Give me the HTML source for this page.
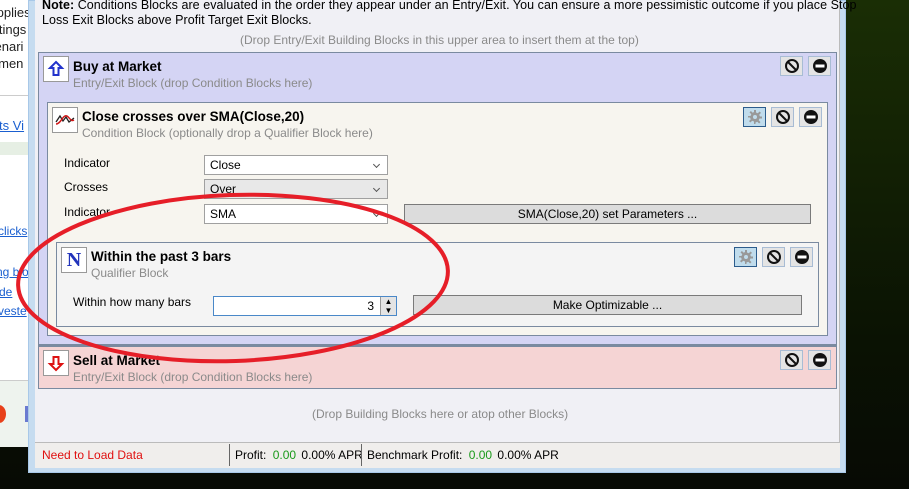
<!DOCTYPE html>
<html><head><meta charset="utf-8"><style>
*{margin:0;padding:0;box-sizing:border-box}
body{width:909px;height:489px;overflow:hidden;position:relative;font-family:"Liberation Sans",sans-serif;font-size:12px;color:#000;background:linear-gradient(180deg,#1a2e05,#0a1203 70%,#070a04)}
.a{position:absolute}
.lnk{color:#1a5fd0;text-decoration:underline}
.blk{position:absolute;border:1px solid #7a8aa0}
.ttl{position:absolute;font-weight:bold;font-size:13.5px}
.sub{position:absolute;color:#8a8a8a;font-size:12px}
.ib{position:absolute;width:23px;height:20px;background:#e4e4e4;border:1px solid #a8bcd4;display:flex;align-items:center;justify-content:center}
.ib.g{background:#c0dcec;border-color:#2c5c8c}
.dd{position:absolute;height:20px;border:1px solid #a0a0a0;background:#fff;padding:2px 5px;font-size:12px}
.dd:after{content:"";position:absolute;right:8px;top:6px;width:4px;height:4px;border-right:1px solid #555;border-bottom:1px solid #555;transform:rotate(45deg)}
.btn{position:absolute;height:20px;border:1px solid #7a7a7a;background:#dcdcdc;text-align:center;line-height:18px;font-size:12px}
.lb{position:absolute;font-size:12px}
.icon{position:absolute;width:26px;height:26px;background:#fff;border:1px solid #999}
</style></head><body>
<!-- left page -->
<div class="a" style="left:0;top:0;width:30px;height:380px;background:#fff"></div>
<div class="a" style="left:0;top:380px;width:30px;height:67px;background:#eef3ee;border-top:1px solid #ccc"></div>
<div class="a" style="top:4px;font-size:13px;line-height:17px;color:#222;left:-12px">Applies<br>ettings<br>cenari<br>lemen</div>
<div class="a" style="left:0;top:95px;width:30px;height:1px;background:#ccc"></div>
<div class="a lnk" style="left:-1px;top:118px;font-size:13px">ts Vi</div>
<div class="a" style="left:0;top:142px;width:30px;height:13px;background:#e6efe4"></div>
<div class="a lnk" style="left:-2px;top:224px;font-size:12px">clicks</div>
<div class="a lnk" style="left:-4px;top:265px;font-size:12px">ng blo</div>
<div class="a lnk" style="left:-1px;top:285px;font-size:12px">de</div>
<div class="a lnk" style="left:-2px;top:304px;font-size:12px">veste</div>
<div class="a" style="left:-8px;top:405px;width:14px;height:18px;border-radius:50%;background:#e8401a"></div>
<div class="a" style="left:25px;top:406px;width:4px;height:16px;background:#6a7ad0"></div>
<!-- window -->
<div class="a" style="left:28px;top:0;width:818px;height:473px;background:#c6dcf0;border:1px solid #a8c8e8"></div>
<div class="a" style="left:35px;top:0;width:805px;height:442px;background:#f0f0f5;border-right:1px solid #bbb"></div>
<div class="a" style="left:42px;top:-2px;font-size:12.5px;line-height:15px;width:830px;letter-spacing:0.05px"><b>Note:</b> Conditions Blocks are evaluated in the order they appear under an Entry/Exit. You can ensure a more pessimistic outcome if you place Stop Loss Exit Blocks above Profit Target Exit Blocks.</div>
<div class="a" style="left:240px;top:33px;color:#8a8a8a">(Drop Entry/Exit Building Blocks in this upper area to insert them at the top)</div>
<!-- buy -->
<div class="blk" style="left:38px;top:52px;width:799px;height:293px;background:#d4d4f4"></div>
<div class="icon" style="left:43px;top:56px"><svg width="24" height="24" viewBox="0 0 24 24"><path d="M12 5 L18 11 H14.5 V18 H9.5 V11 H6 Z" fill="none" stroke="#2233cc" stroke-width="2"/></svg></div>
<div class="ttl" style="left:73px;top:59px">Buy at Market</div>
<div class="sub" style="left:73px;top:76px">Entry/Exit Block (drop Condition Blocks here)</div>
<!-- condition -->
<div class="blk" style="left:47px;top:102px;width:781px;height:234px;background:#f7f5ef"></div>
<div class="icon" style="left:52px;top:107px"><svg width="24" height="24" viewBox="0 0 24 24"><path d="M3 14 L7 8 L10 13 L13 9 L16 14 L21 10" fill="none" stroke="#222" stroke-width="1.3"/><path d="M3 16 C8 16 10 6 14 8 C17 10 18 14 21 12" fill="none" stroke="#d01818" stroke-width="1.5"/></svg></div>
<div class="ttl" style="left:82px;top:109px">Close crosses over SMA(Close,20)</div>
<div class="sub" style="left:82px;top:126px">Condition Block (optionally drop a Qualifier Block here)</div>
<div class="lb" style="left:64px;top:156px">Indicator</div>
<div class="lb" style="left:64px;top:180px">Crosses</div>
<div class="lb" style="left:64px;top:205px">Indicator</div>
<div class="dd" style="left:204px;top:155px;width:184px">Close</div>
<div class="dd" style="left:204px;top:179px;width:184px;background:#e8e8e8">Over</div>
<div class="dd" style="left:204px;top:204px;width:184px">SMA</div>
<div class="btn" style="left:404px;top:204px;width:407px">SMA(Close,20) set Parameters ...</div>
<!-- qualifier -->
<div class="blk" style="left:56px;top:242px;width:763px;height:85px;background:#f4f4f4"></div>
<div class="icon" style="left:61px;top:247px;font-family:'Liberation Serif',serif;font-weight:bold;font-size:20px;color:#2233bb;text-align:center;line-height:24px">N</div>
<div class="ttl" style="left:91px;top:249px">Within the past 3 bars</div>
<div class="sub" style="left:91px;top:266px">Qualifier Block</div>
<div class="lb" style="left:73px;top:295px">Within how many bars</div>
<div class="a" style="left:213px;top:296px;width:184px;height:20px;border:1px solid #4a88c8;background:#fff;text-align:right;padding:2px 22px 0 0">3</div>
<div class="a" style="left:380px;top:297px;width:16px;height:18px;background:#e4e4e4;border-left:1px solid #999;font-size:8px;line-height:9px;text-align:center">▲<br>▼</div>
<div class="btn" style="left:413px;top:295px;width:389px">Make Optimizable ...</div>
<!-- sell -->
<div class="blk" style="left:38px;top:345px;width:799px;height:44px;background:#f5d4d4;border-top:2px solid #7a8aa0"></div>
<div class="icon" style="left:43px;top:350px"><svg width="24" height="24" viewBox="0 0 24 24"><path d="M12 19 L18 13 H14.5 V6 H9.5 V13 H6 Z" fill="none" stroke="#dd1111" stroke-width="2"/></svg></div>
<div class="ttl" style="left:73px;top:353px">Sell at Market</div>
<div class="sub" style="left:73px;top:370px">Entry/Exit Block (drop Condition Blocks here)</div>
<div class="a" style="left:312px;top:407px;color:#8a8a8a">(Drop Building Blocks here or atop other Blocks)</div>
<!-- buttons -->
<svg width="0" height="0" style="position:absolute"><defs>
<g id="no"><circle cx="8" cy="8" r="6" fill="none" stroke="#111" stroke-width="2"/><path d="M4 4 L12 12" stroke="#111" stroke-width="2"/></g>
<g id="mi"><circle cx="8" cy="8" r="7" fill="#111"/><rect x="3.5" y="6.5" width="9" height="3" fill="#fff"/></g>
<g id="ge"><path d="M7 1h2v2.5l1.8.8 1.8-1.8 1.4 1.4-1.8 1.8.8 1.8H15v2h-2.5l-.8 1.8 1.8 1.8-1.4 1.4-1.8-1.8-1.8.8V15H7v-2.5l-1.8-.8-1.8 1.8-1.4-1.4 1.8-1.8-.8-1.8H1V7h2.5l.8-1.8L2.5 3.4l1.4-1.4 1.8 1.8L7 3z" fill="#999"/><circle cx="8" cy="8" r="2" fill="#c0dcec"/></g>
</defs></svg>
<div class="ib" style="left:780px;top:56px"><svg width="16" height="16"><use href="#no"/></svg></div>
<div class="ib" style="left:808px;top:56px"><svg width="16" height="16"><use href="#mi"/></svg></div>
<div class="ib g" style="left:743px;top:107px"><svg width="16" height="16"><use href="#ge"/></svg></div>
<div class="ib" style="left:771px;top:107px"><svg width="16" height="16"><use href="#no"/></svg></div>
<div class="ib" style="left:799px;top:107px"><svg width="16" height="16"><use href="#mi"/></svg></div>
<div class="ib g" style="left:734px;top:247px"><svg width="16" height="16"><use href="#ge"/></svg></div>
<div class="ib" style="left:762px;top:247px"><svg width="16" height="16"><use href="#no"/></svg></div>
<div class="ib" style="left:790px;top:247px"><svg width="16" height="16"><use href="#mi"/></svg></div>
<div class="ib" style="left:780px;top:350px"><svg width="16" height="16"><use href="#no"/></svg></div>
<div class="ib" style="left:808px;top:350px"><svg width="16" height="16"><use href="#mi"/></svg></div>
<!-- status -->
<div class="a" style="left:35px;top:442px;width:805px;height:26px;background:#f0eeec;border-top:1px solid #bbb"></div>
<div class="a" style="left:42px;top:448px;color:#e01010">Need to Load Data</div>
<div class="a" style="left:229px;top:444px;width:1px;height:22px;background:#666"></div>
<div class="a" style="left:235px;top:448px">Profit: <span style="color:#1a9a1a;margin-left:3px">0.00</span> <span style="margin-left:2px">0.00% APR</span></div>
<div class="a" style="left:361px;top:444px;width:1px;height:22px;background:#666"></div>
<div class="a" style="left:367px;top:448px">Benchmark Profit: <span style="color:#1a9a1a;margin-left:3px">0.00</span> <span style="margin-left:2px">0.00% APR</span></div>
<!-- red ellipse -->
<svg class="a" style="left:0;top:0" width="909" height="489"><ellipse cx="233" cy="278" rx="215" ry="83" transform="rotate(-2 233 278)" fill="none" stroke="#e61e28" stroke-width="4"/></svg>
</body></html>
